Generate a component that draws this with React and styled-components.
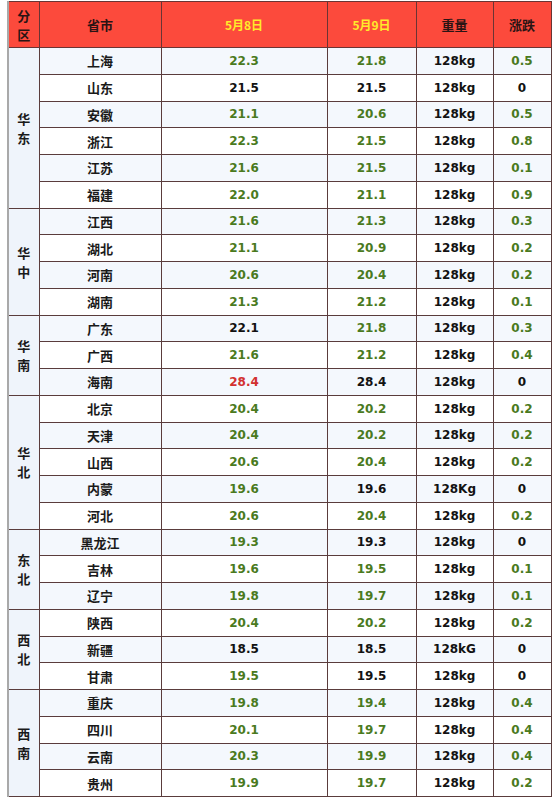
import React from "react";
import styled, { createGlobalStyle } from "styled-components";

const GlobalStyle = createGlobalStyle`
  html, body {
    margin: 0;
    padding: 0;
    background: #fff;
  }
`;

const Page = styled.div`
  padding: 1px 4px 0 7px;
`;

const Table = styled.table`
  width: 543px;
  table-layout: fixed;
  border-collapse: collapse;
  border-left: 2px solid #a9a9a9;
  border-right: 1px solid #a9a9a9;
  border-bottom: 1px solid #8a7070;
  font-family: "DejaVu Sans", "Noto Sans CJK SC", sans-serif;
  font-weight: bold;
`;

const HeadRow = styled.tr`
  height: 46px;
  background: #fc4a3c;
`;

const Th = styled.th`
  border: 1px solid #6a3434;
  text-align: center;
  font-size: ${(p) => (p.$date ? "12px" : "13px")};
  font-family: "Noto Sans CJK SC", "DejaVu Sans", sans-serif;
  color: ${(p) => (p.$date ? "#ffeb2a" : "#2a1414")};
  line-height: 19px;
  padding: 0;
`;

const Row = styled.tr`
  height: 26.75px;
  background: ${(p) => (p.$odd ? "#ffffff" : "#f4f8fd")};
`;

const Region = styled.td`
  border: 1px solid #5a3c3c;
  border-left: none;
  background: #eff4fb;
  text-align: center;
  font-family: "Noto Sans CJK SC", sans-serif;
  font-size: 13px;
  line-height: 19px;
  color: #1a1a1a;
  padding: 0;
`;

const Province = styled.td`
  border: 1px solid #5a3c3c;
  text-align: center;
  font-family: "Noto Sans CJK SC", sans-serif;
  font-size: 13px;
  color: #1a1a1a;
  padding: 0;
`;

const Num = styled.td`
  border: 1px solid #5a3c3c;
  text-align: center;
  font-size: 12px;
  color: ${(p) => (p.$tone === "g" ? "#4a7a1e" : p.$tone === "r" ? "#d23030" : "#121212")};
  padding: 0;
`;

const data = [
  ["华东", [
    ["上海", "22.3", "g", "21.8", "g", "128kg", "0.5", "g"],
    ["山东", "21.5", "k", "21.5", "k", "128kg", "0", "k"],
    ["安徽", "21.1", "g", "20.6", "g", "128kg", "0.5", "g"],
    ["浙江", "22.3", "g", "21.5", "g", "128kg", "0.8", "g"],
    ["江苏", "21.6", "g", "21.5", "g", "128kg", "0.1", "g"],
    ["福建", "22.0", "g", "21.1", "g", "128kg", "0.9", "g"],
  ]],
  ["华中", [
    ["江西", "21.6", "g", "21.3", "g", "128kg", "0.3", "g"],
    ["湖北", "21.1", "g", "20.9", "g", "128kg", "0.2", "g"],
    ["河南", "20.6", "g", "20.4", "g", "128kg", "0.2", "g"],
    ["湖南", "21.3", "g", "21.2", "g", "128kg", "0.1", "g"],
  ]],
  ["华南", [
    ["广东", "22.1", "k", "21.8", "g", "128kg", "0.3", "g"],
    ["广西", "21.6", "g", "21.2", "g", "128kg", "0.4", "g"],
    ["海南", "28.4", "r", "28.4", "k", "128kg", "0", "k"],
  ]],
  ["华北", [
    ["北京", "20.4", "g", "20.2", "g", "128kg", "0.2", "g"],
    ["天津", "20.4", "g", "20.2", "g", "128kg", "0.2", "g"],
    ["山西", "20.6", "g", "20.4", "g", "128kg", "0.2", "g"],
    ["内蒙", "19.6", "g", "19.6", "k", "128Kg", "0", "k"],
    ["河北", "20.6", "g", "20.4", "g", "128kg", "0.2", "g"],
  ]],
  ["东北", [
    ["黑龙江", "19.3", "g", "19.3", "k", "128kg", "0", "k"],
    ["吉林", "19.6", "g", "19.5", "g", "128kg", "0.1", "g"],
    ["辽宁", "19.8", "g", "19.7", "g", "128kg", "0.1", "g"],
  ]],
  ["西北", [
    ["陕西", "20.4", "g", "20.2", "g", "128kg", "0.2", "g"],
    ["新疆", "18.5", "k", "18.5", "k", "128kG", "0", "k"],
    ["甘肃", "19.5", "g", "19.5", "k", "128kg", "0", "k"],
  ]],
  ["西南", [
    ["重庆", "19.8", "g", "19.4", "g", "128kg", "0.4", "g"],
    ["四川", "20.1", "g", "19.7", "g", "128kg", "0.4", "g"],
    ["云南", "20.3", "g", "19.9", "g", "128kg", "0.4", "g"],
    ["贵州", "19.9", "g", "19.7", "g", "128kg", "0.2", "g"],
  ]],
];

const Stacked = ({ text }) => (
  <>
    {text.split("").map((c, i) => (
      <React.Fragment key={i}>
        {c}
        {i < text.length - 1 && <br />}
      </React.Fragment>
    ))}
  </>
);

export default function App() {
  let index = 0;
  return (
    <Page>
      <GlobalStyle />
      <Table>
        <colgroup>
          <col style={{ width: 31 }} />
          <col style={{ width: 122 }} />
          <col style={{ width: 166 }} />
          <col style={{ width: 89 }} />
          <col style={{ width: 77 }} />
          <col style={{ width: 58 }} />
        </colgroup>
        <thead>
          <HeadRow>
            <Th><Stacked text="分区" /></Th>
            <Th>省市</Th>
            <Th $date>5月8日</Th>
            <Th $date>5月9日</Th>
            <Th>重量</Th>
            <Th>涨跌</Th>
          </HeadRow>
        </thead>
        <tbody>
          {data.map(([region, rows]) =>
            rows.map((r, i) => {
              const odd = index++ % 2 === 1;
              return (
                <Row key={r[0]} $odd={odd}>
                  {i === 0 && (
                    <Region rowSpan={rows.length}>
                      <Stacked text={region} />
                    </Region>
                  )}
                  <Province>{r[0]}</Province>
                  <Num $tone={r[2]}>{r[1]}</Num>
                  <Num $tone={r[4]}>{r[3]}</Num>
                  <Num $tone="k">{r[5]}</Num>
                  <Num $tone={r[7]}>{r[6]}</Num>
                </Row>
              );
            })
          )}
        </tbody>
      </Table>
    </Page>
  );
}
